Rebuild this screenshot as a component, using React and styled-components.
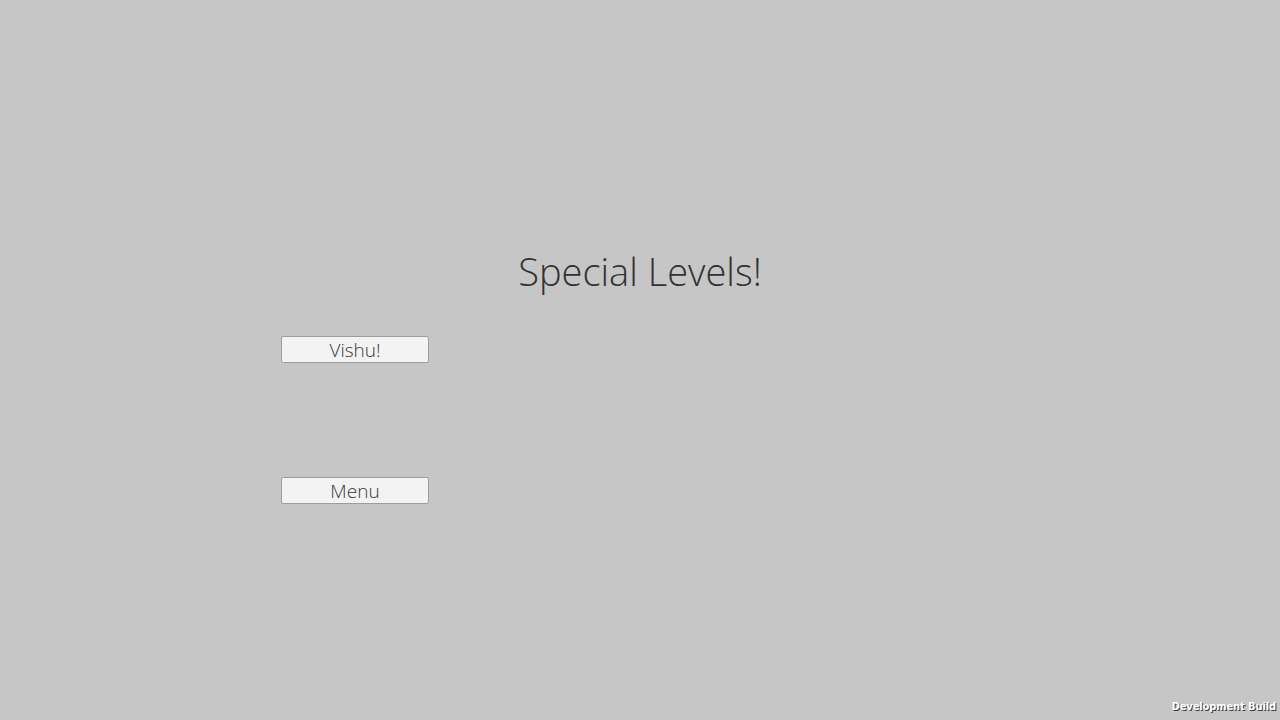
import styled, { createGlobalStyle } from 'styled-components';

const GlobalStyle = createGlobalStyle`
  html, body {
    margin: 0;
    padding: 0;
    background: #c6c6c6;
  }
  body {
    font-family: 'Open Sans', 'Noto Sans', sans-serif;
  }
`;

const Screen = styled.main`
  position: relative;
  width: 1280px;
  height: 720px;
  overflow: hidden;
  background: #c6c6c6;
  display: flex;
  flex-direction: column;
  padding-top: 245px;
  box-sizing: border-box;
`;

const Title = styled.h1`
  margin: 0;
  text-align: center;
  font-family: 'Open Sans', sans-serif;
  font-weight: 300;
  font-size: 38px;
  line-height: 52px;
  color: #323232;
`;

const ButtonColumn = styled.div`
  display: flex;
  flex-direction: column;
  gap: 114px;
  margin-top: 39px;
  padding-left: 281px;
`;

const MenuButton = styled.button`
  width: 148px;
  height: 27px;
  padding: 1px 0 0;
  box-sizing: border-box;
  background: #f3f3f3;
  border: 1px solid #9c9c9c;
  border-radius: 2px;
  font-family: 'Open Sans', sans-serif;
  font-weight: 300;
  font-size: 19px;
  line-height: 25px;
  color: #383838;
  cursor: pointer;
`;

const BuildLabel = styled.div`
  position: absolute;
  right: 4px;
  bottom: 7px;
  font-family: 'DejaVu Sans Condensed', 'DejaVu Sans', sans-serif;
  font-weight: bold;
  font-size: 11px;
  letter-spacing: -0.1px;
  color: #ffffff;
  text-shadow: 1px 1px 0 #3a3a3a;
`;

export default function App() {
  return (
    <>
      <GlobalStyle />
      <Screen>
        <Title>Special Levels!</Title>
        <ButtonColumn>
          <MenuButton>Vishu!</MenuButton>
          <MenuButton>Menu</MenuButton>
        </ButtonColumn>
        <BuildLabel>Development Build</BuildLabel>
      </Screen>
    </>
  );
}
